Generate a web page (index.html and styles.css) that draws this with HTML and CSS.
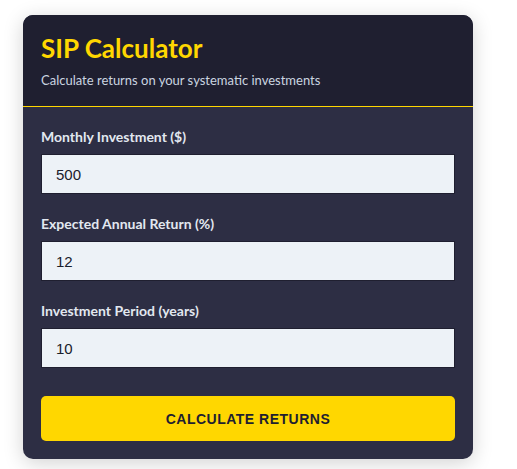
FILE: index.html
```html
<!DOCTYPE html>
<html lang="en">
<head>
    <meta charset="UTF-8">
    <meta name="viewport" content="width=device-width, initial-scale=1.0">
    <title>SIP Calculator</title>
    <link rel="stylesheet" href="styles.css">
</head>
<body>
<div class="calculator">
    <div class="header">
        <h1 class="title">SIP Calculator</h1>
        <p class="subtitle">Calculate returns on your systematic investments</p>
    </div>
    <div class="form">
        <div class="field">
            <label for="monthly">Monthly Investment ($)</label>
            <input type="number" id="monthly" value="500">
        </div>
        <div class="field">
            <label for="rate">Expected Annual Return (%)</label>
            <input type="number" id="rate" value="12">
        </div>
        <div class="field">
            <label for="years">Investment Period (years)</label>
            <input type="number" id="years" value="10">
        </div>
        <button class="calc-button">Calculate Returns</button>
    </div>
</div>
</body>
</html>
```

FILE: styles.css
```css
body {
    margin: 0;
    padding: 15px 23px;
    background-color: white;
    font-family: Lato, "Noto Sans", sans-serif;
}

.calculator {
    width: 450px;
    background-color: #2d2e44;
    border-radius: 10px;
    overflow: hidden;
    box-shadow: 0 4px 20px rgba(0, 0, 0, 0.18);
}

.header {
    background-color: #1f1f30;
    padding: 18px 18px 17px;
    border-bottom: 1px solid #ffd700;
}

.title {
    margin: 0;
    color: #ffd700;
    font-size: 26px;
    font-weight: bold;
    line-height: 30px;
}

.subtitle {
    margin: 8px 0 0;
    color: #cbd5e0;
    font-size: 13px;
    line-height: 18px;
}

.form {
    padding: 20px 18px 18px;
}

.field {
    margin-bottom: 20px;
}

.field label {
    display: block;
    margin-bottom: 8px;
    color: #e2e8f0;
    font-size: 14px;
    font-weight: bold;
    line-height: 19px;
}

.field input {
    box-sizing: border-box;
    width: 100%;
    height: 40px;
    padding: 0 14px;
    background-color: #edf2f7;
    border: 1px solid #1f1f30;
    color: #1a202c;
    font-family: "Liberation Sans", Arial, sans-serif;
    font-size: 15px;
    outline: none;
}

.field input::-webkit-inner-spin-button {
    -webkit-appearance: none;
}

.calc-button {
    display: block;
    width: 100%;
    height: 45px;
    margin-top: 28px;
    background-color: #ffd700;
    border: none;
    border-radius: 5px;
    color: #1f1f30;
    font-family: "Liberation Sans", Arial, sans-serif;
    font-size: 14px;
    font-weight: bold;
    letter-spacing: 0.5px;
    text-transform: uppercase;
    cursor: pointer;
}
```
